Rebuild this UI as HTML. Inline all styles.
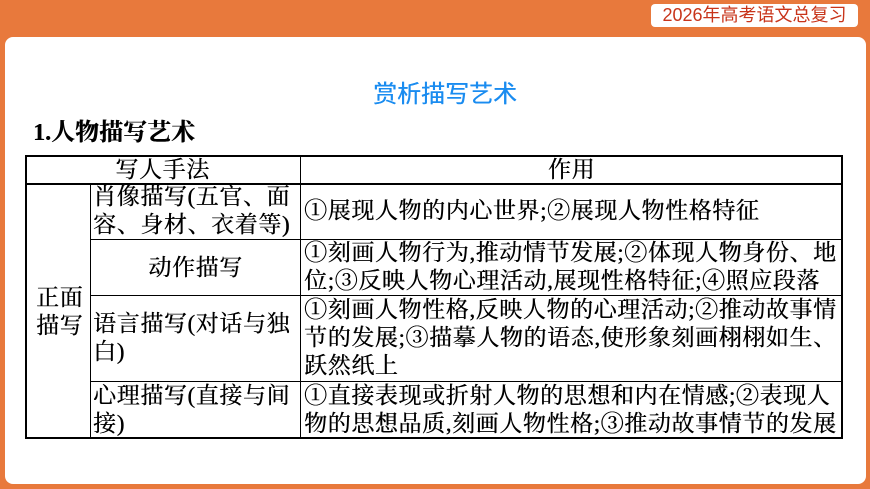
<!DOCTYPE html>
<html><head><meta charset="utf-8"><style>
*{margin:0;padding:0;box-sizing:border-box}
body{width:870px;height:489px;background:#e8793c;position:relative;overflow:hidden;font-family:"Liberation Serif","Noto Serif CJK SC",serif;color:#000}
.panel{position:absolute;left:5px;top:37px;width:861px;height:447px;background:#fff;border-radius:8px}
.tag{position:absolute;left:651px;top:4px;width:207px;height:23px;background:#fff;border-radius:4px;color:#c8341a;font-family:"Liberation Sans","Noto Sans CJK SC",sans-serif;font-size:18px;line-height:23px;text-align:center}
.t{position:absolute;white-space:nowrap;font-size:23px;letter-spacing:0.6px;line-height:28px;height:28px;text-shadow:0.4px 0 0 #000}
.h{position:absolute;background:#000}
</style></head><body>
<div class="panel"></div>
<div class="tag">2026年高考语文总复习</div>
<div class="t" style="left:0;width:890px;text-align:center;top:81px;font-size:24px;color:#1a8cf0;text-shadow:0.4px 0 0 #1a8cf0;font-family:'Liberation Sans','Noto Sans CJK SC',sans-serif;letter-spacing:0">赏析描写艺术</div>
<div class="t" style="left:33px;top:119px;font-weight:bold;font-size:24px;letter-spacing:0">1.人物描写艺术</div>
<div class="h" style="left:25px;top:155px;width:818px;height:2px"></div>
<div class="h" style="left:25px;top:183px;width:818px;height:1.5px"></div>
<div class="h" style="left:90px;top:239px;width:753px;height:1px"></div>
<div class="h" style="left:90px;top:295px;width:753px;height:1px"></div>
<div class="h" style="left:90px;top:381px;width:753px;height:1px"></div>
<div class="h" style="left:25px;top:437px;width:818px;height:1.5px"></div>
<div class="h" style="left:25px;top:155px;width:1.5px;height:284px"></div>
<div class="h" style="left:90px;top:184px;width:1px;height:254px"></div>
<div class="h" style="left:300px;top:155px;width:1px;height:284px"></div>
<div class="h" style="left:841px;top:155px;width:1.5px;height:284px"></div>
<div class="t" style="left:25px;width:275px;text-align:center;top:156px">写人手法</div>
<div class="t" style="left:301px;width:541px;text-align:center;top:156px">作用</div>
<div class="t" style="left:36px;top:284px">正面</div>
<div class="t" style="left:36px;top:312px">描写</div>
<div class="t" style="left:93px;top:183px">肖像描写(五官、面</div>
<div class="t" style="left:93px;top:211px">容、身材、衣着等)</div>
<div class="t" style="left:304px;top:197px">①展现人物的内心世界;②展现人物性格特征</div>
<div class="t" style="left:91px;width:209px;text-align:center;top:254px">动作描写</div>
<div class="t" style="left:304px;top:239px">①刻画人物行为,推动情节发展;②体现人物身份、地</div>
<div class="t" style="left:304px;top:267px">位;③反映人物心理活动,展现性格特征;④照应段落</div>
<div class="t" style="left:93px;top:310px">语言描写(对话与独</div>
<div class="t" style="left:93px;top:338px">白)</div>
<div class="t" style="left:304px;top:296px">①刻画人物性格,反映人物的心理活动;②推动故事情</div>
<div class="t" style="left:304px;top:324px">节的发展;③描摹人物的语态,使形象刻画栩栩如生、</div>
<div class="t" style="left:304px;top:352px">跃然纸上</div>
<div class="t" style="left:93px;top:382px">心理描写(直接与间</div>
<div class="t" style="left:93px;top:410px">接)</div>
<div class="t" style="left:304px;top:382px">①直接表现或折射人物的思想和内在情感;②表现人</div>
<div class="t" style="left:304px;top:410px">物的思想品质,刻画人物性格;③推动故事情节的发展</div>
</body></html>
